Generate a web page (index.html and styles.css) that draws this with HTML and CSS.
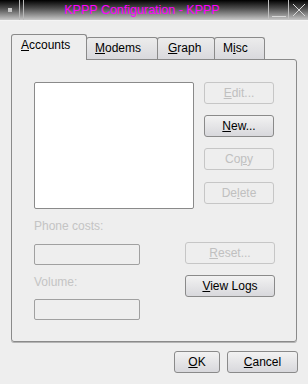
FILE: index.html
```html
<!DOCTYPE html>
<html lang="en">
<head>
  <meta charset="UTF-8">
  <title>KPPP Configuration - KPPP</title>
  <link rel="stylesheet" href="styles.css">
</head>
<body>
  <div class="titlebar">
    <div class="tb-menu"><span class="tb-dot"></span></div>
    <div class="tb-title">KPPP Configuration - KPPP</div>
    <div class="tb-btn tb-min"><span></span></div>
    <div class="tb-btn tb-close">
      <svg width="18" height="18" viewBox="0 0 18 18"><path d="M3 3 L15 15 M15 3 L3 15" stroke="#d8d8d8" stroke-width="1" fill="none"/></svg>
    </div>
  </div>
  <div class="dialog">
    <div class="tabs">
      <div class="tab active tab-accounts"><u>A</u>ccounts</div>
      <div class="tab tab-modems"><u>M</u>odems</div>
      <div class="tab tab-graph"><u>G</u>raph</div>
      <div class="tab tab-misc">M<u>i</u>sc</div>
    </div>
    <div class="pane">
      <div class="top-row">
        <div class="listbox"></div>
        <div class="side-buttons">
          <button class="btn disabled"><u>E</u>dit...</button>
          <button class="btn"><u>N</u>ew...</button>
          <button class="btn disabled">Co<u>p</u>y</button>
          <button class="btn disabled">De<u>l</u>ete</button>
        </div>
      </div>
      <div class="bottom-row">
        <div class="fields">
          <div class="label">Phone costs:</div>
          <div class="field"></div>
          <div class="label label-volume">Volume:</div>
          <div class="field field-volume"></div>
        </div>
        <div class="log-buttons">
          <button class="btn wide disabled"><u>R</u>eset...</button>
          <button class="btn wide"><u>V</u>iew Logs</button>
        </div>
      </div>
    </div>
    <div class="dialog-buttons">
      <button class="btn ok"><u>O</u>K</button>
      <button class="btn cancel"><u>C</u>ancel</button>
    </div>
  </div>
</body>
</html>
```

FILE: styles.css
```css
body {
  margin: 0;
  width: 308px;
  height: 384px;
  background: #eeeeee;
  font-family: 'Liberation Sans', Arial, sans-serif;
  font-size: 12px;
  color: #000;
  overflow: hidden;
}
.titlebar {
  height: 21px;
  display: flex;
  background: linear-gradient(#000000, #4a4a4a 40%, #a8a8a8 85%, #c8c8c8);
  border-bottom: 1px solid #f4f4f4;
  box-sizing: border-box;
}
.tb-menu {
  width: 19px;
  border-right: 1px solid #b8b8b8;
  display: flex;
  align-items: center;
  justify-content: center;
}
.tb-dot {
  width: 4px;
  height: 4px;
  background: #c4c4c4;
}
.tb-title {
  flex: 1;
  margin-left: 3px;
  border-left: 1px solid #b8b8b8;
  color: #ff00ff;
  text-align: center;
  line-height: 20px;
  font-size: 12.5px;
  padding-right: 8px;
}
.tb-btn {
  width: 19px;
  border-left: 1px solid #c0c0c0;
  display: flex;
  justify-content: center;
}
.tb-min span {
  width: 14px;
  height: 1px;
  margin-top: 16px;
  background: #d8d8d8;
}
.tb-close svg {
  margin-top: 1px;
}
.dialog {
  padding: 13px 0 0 11px;
}
.tabs {
  display: flex;
  align-items: flex-end;
  height: 26px;
  margin-bottom: -1px;
  position: relative;
}
.tab {
  box-sizing: border-box;
  height: 22px;
  margin-bottom: 1px;
  margin-left: -1px;
  padding-left: 8px;
  line-height: 20px;
  border: 1px solid #8a8a8a;
  border-bottom: none;
  border-radius: 3px 3px 0 0;
  background: linear-gradient(#ececec, #d9d9dd);
}
.tab.active {
  height: 26px;
  margin-bottom: 0;
  margin-left: 0;
  line-height: 20px;
  background: #eeeeee;
  padding-left: 9px;
  z-index: 1;
}
.tab-accounts { width: 76px; }
.tab-modems { width: 72px; }
.tab-graph { width: 58px; padding-left: 10px; }
.tab-misc { width: 51px; }
.pane {
  box-sizing: border-box;
  width: 286px;
  height: 283px;
  border: 1px solid #8a8a8a;
  border-radius: 0 3px 3px 3px;
  box-shadow: 0 1px 0 #b4b4b4;
  padding: 22px 0 0 22px;
}
.top-row {
  display: flex;
  align-items: flex-start;
}
.listbox {
  box-sizing: border-box;
  width: 160px;
  height: 127px;
  background: #fff;
  border: 1px solid #8a8a8a;
  border-radius: 2px;
}
.side-buttons {
  display: flex;
  flex-direction: column;
  gap: 11px;
  margin-left: 10px;
}
.side-buttons .btn {
  width: 70px;
}
.side-buttons .btn:nth-child(4) {
  margin-top: 1px;
}
.btn {
  box-sizing: border-box;
  height: 22px;
  padding: 0;
  font-family: inherit;
  font-size: 12px;
  color: #000;
  border: 1px solid #8a8a8a;
  border-radius: 3px;
  background: linear-gradient(#f2f2f2, #d8d8dc);
  text-align: center;
  line-height: 20px;
}
.btn.disabled {
  color: #c0c0c0;
  border-color: #c6c6c6;
  background: #eeeeee;
}
.bottom-row {
  display: flex;
}
.fields {
  width: 106px;
  padding-top: 10px;
}
.label {
  line-height: 14px;
  color: #c4c4c4;
}
.field {
  box-sizing: border-box;
  height: 21px;
  margin-top: 11px;
  border: 1px solid #a0a0a0;
  border-radius: 2px;
  background: #eeeeee;
}
.label-volume {
  margin-top: 10px;
}
.field-volume {
  margin-top: 10px;
}
.log-buttons {
  display: flex;
  flex-direction: column;
  gap: 11px;
  margin-left: 45px;
  padding-top: 33px;
}
.btn.wide {
  width: 90px;
}
.dialog-buttons {
  display: flex;
  justify-content: flex-end;
  gap: 7px;
  margin-top: 9px;
  padding-right: 10px;
}
.ok { width: 46px; }
.cancel { width: 71px; }
```
